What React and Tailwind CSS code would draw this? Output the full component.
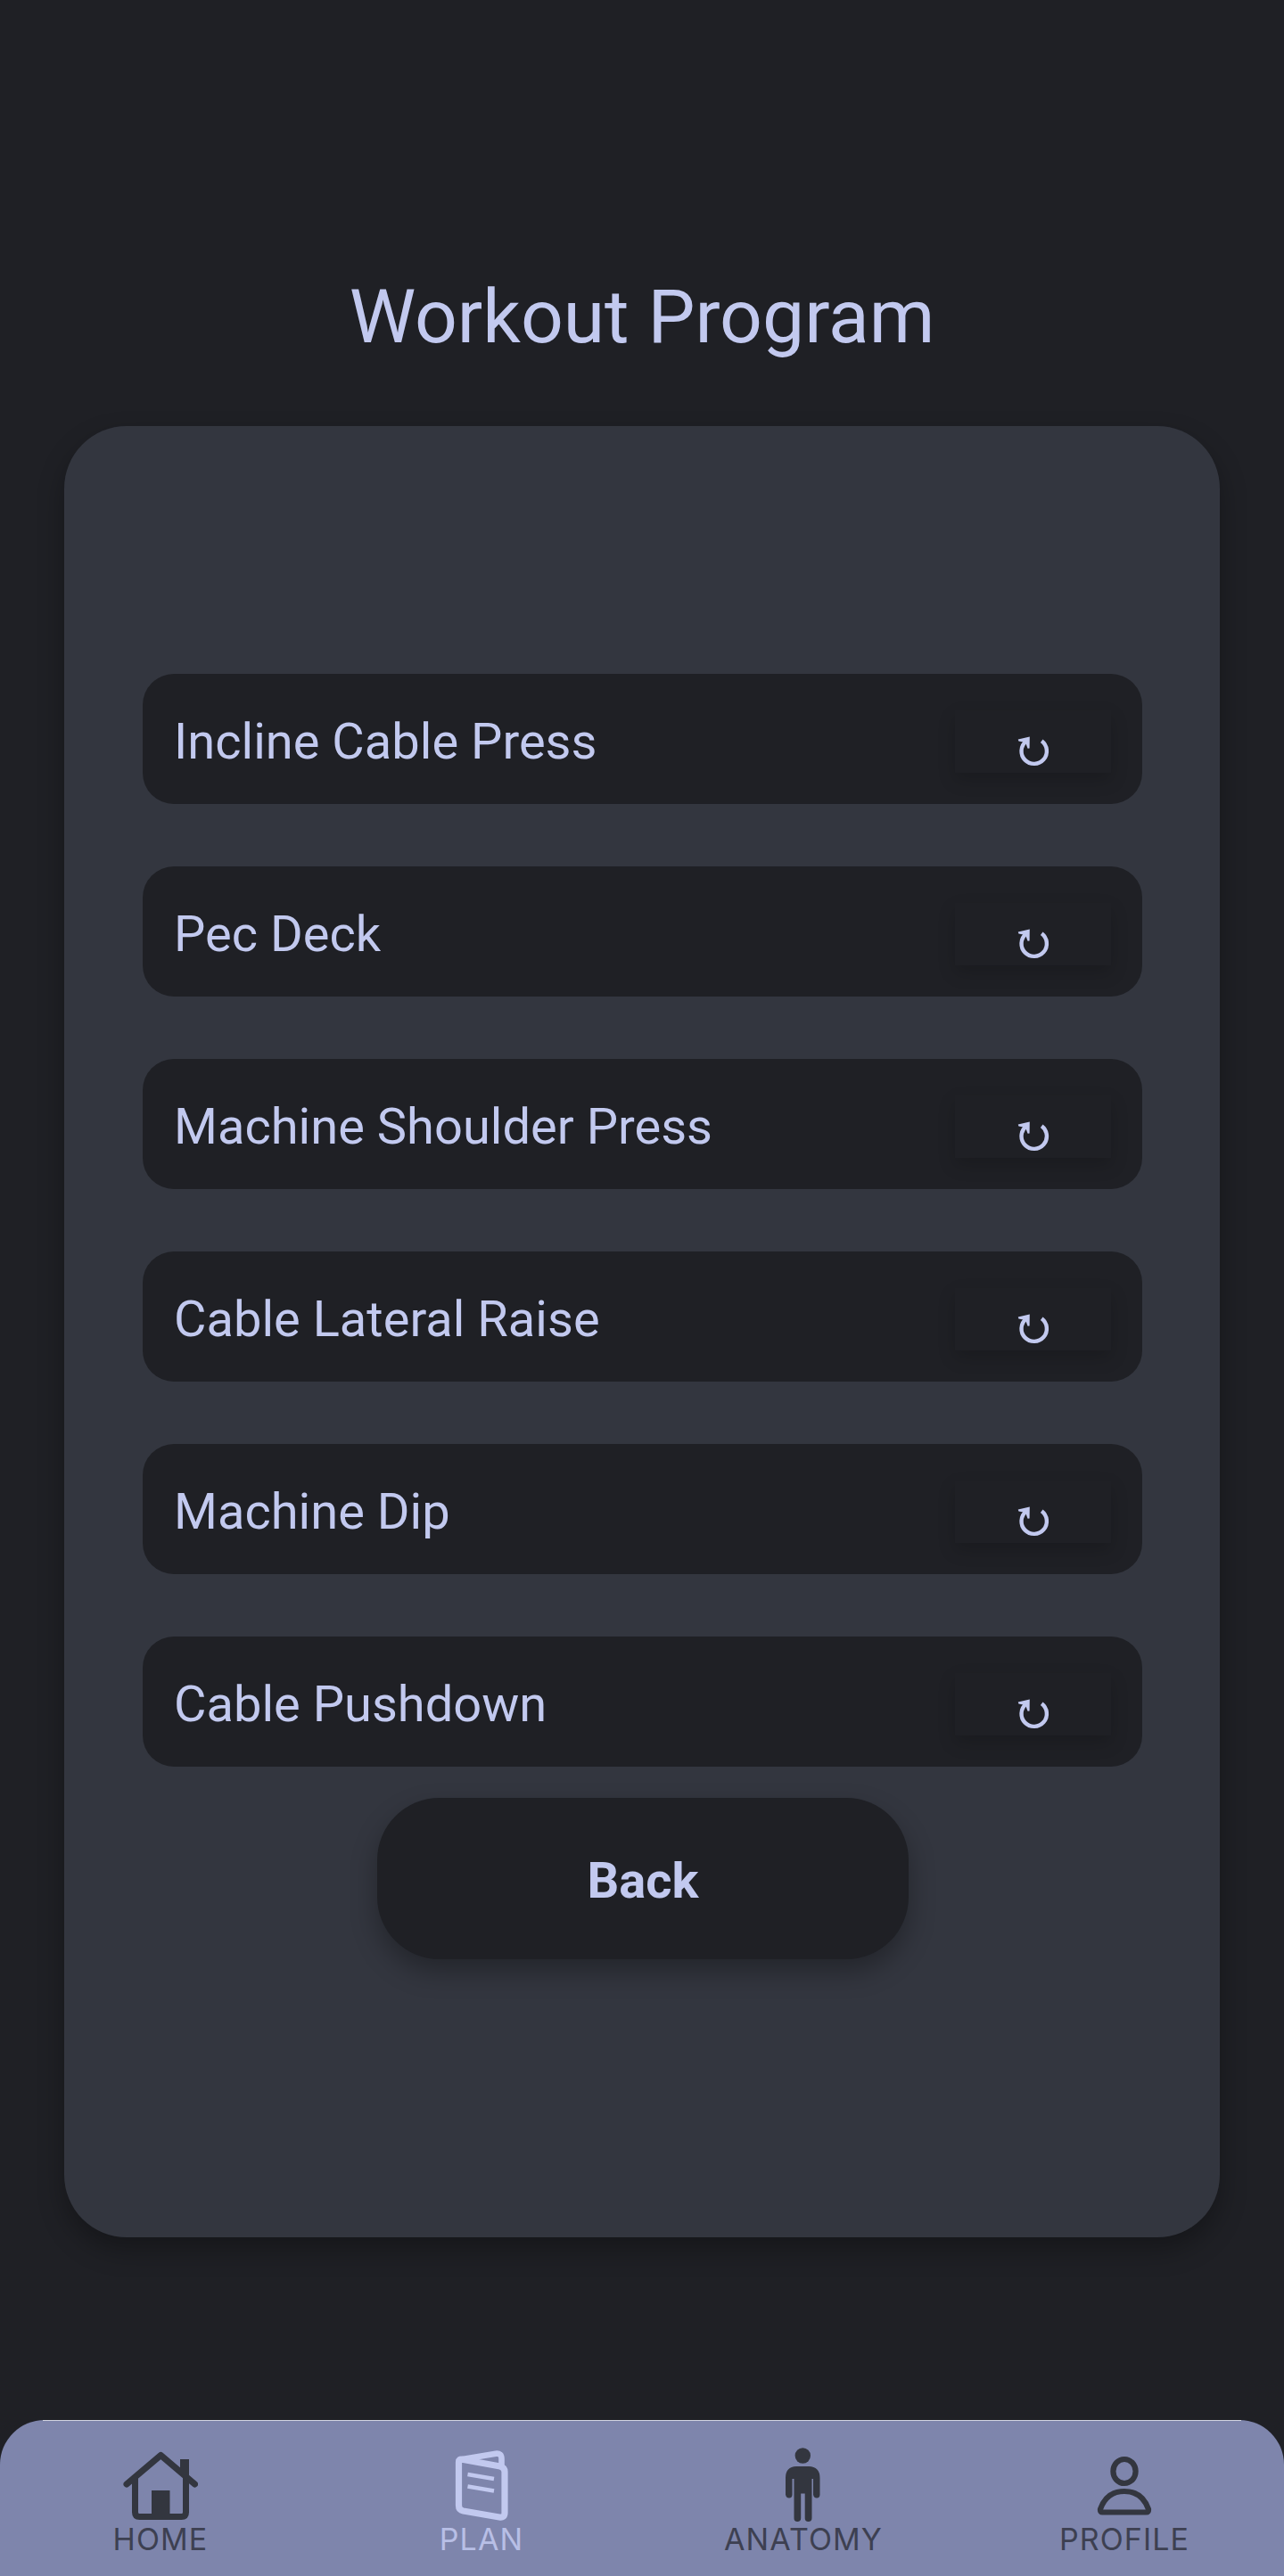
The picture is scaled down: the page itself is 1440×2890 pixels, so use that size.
const exercises = [
  "Incline Cable Press",
  "Pec Deck",
  "Machine Shoulder Press",
  "Cable Lateral Raise",
  "Machine Dip",
  "Cable Pushdown",
];

function RefreshIcon() {
  return (
    <svg width="36" height="34" viewBox="0 0 36 34" fill="none" className="mt-[29px] ml-px">
      <path d="M27.2 5.3A14.2 14.2 0 1 1 9.6 5.8" stroke="#c2c9ef" strokeWidth="4.4" />
      <path d="M0.8 3.4L13.8 0.6L13.6 13.4L11.6 13.8L9 7L1.4 5.4Z" fill="#c2c9ef" />
    </svg>
  );
}

function HomeIcon() {
  return (
    <svg width="84" height="78" viewBox="0 0 84 78" fill="none" stroke="#33363f" strokeLinecap="round" strokeLinejoin="round">
      <path d="M4 37L42.300 4.500L80.500 37" strokeWidth="7" />
      <path d="M13.500 30V68.500Q13.500 73.500 18.500 73.500H65.500Q70.500 73.500 70.500 68.500V30" strokeWidth="7" />
      <path d="M64 9H74V34L64 26Z" fill="#33363f" stroke="none" />
      <path d="M32 44H52.500V73H32Z" fill="#33363f" stroke="none" />
    </svg>
  );
}

function PlanIcon() {
  return (
    <svg width="60" height="80" viewBox="0 0 60 80" fill="none" stroke="#c2c9ef" strokeLinejoin="round">
      <path d="M4.500 13Q4.500 9.500 8.500 10.300L51 18Q56 19.500 56 24V70Q56 76 50 75L9.500 68Q4.500 67 4.500 62Z" strokeWidth="7.200" />
      <path d="M8.500 10L46 3.700Q52.500 3 52.500 9.500V19" strokeWidth="6.600" />
      <path d="M14.500 27L44 32M14.500 40.500L44 45.500" strokeWidth="4.500" />
    </svg>
  );
}

function AnatomyIcon() {
  return (
    <svg width="40" height="84" viewBox="0 0 40 84" fill="#33363f">
      <circle cx="20.300" cy="10" r="8.700" />
      <path d="M13 22H27Q39.500 22.500 39.500 35V53.500Q39.500 57.500 36 57.500T32 53.500V36H30.500V80Q30.500 84 26.500 84T22.700 80V52.500H18.200V80Q18.200 84 14.300 84T10.500 80V36H8.500V53.500Q8.500 57.500 5 57.500T1 53.500V35Q1 22.500 13 22Z" />
    </svg>
  );
}

function ProfileIcon() {
  return (
    <svg width="62" height="68" viewBox="0 0 62 68" fill="none" stroke="#33363f" strokeWidth="6.200" strokeLinejoin="round" className="ml-px">
      <ellipse cx="31" cy="17.500" rx="12.600" ry="13.500" />
      <path d="M6.500 63.500Q3.700 63.500 4 60Q11 40 31 40T58 60Q58.300 63.500 55.500 63.500Z" />
    </svg>
  );
}

const tabs = [
  { label: "HOME", Icon: HomeIcon, pad: "pb-[4px]", color: "text-[#3d4051]" },
  { label: "PLAN", Icon: PlanIcon, pad: "pb-[3px]", color: "text-[#b8bfe6]" },
  { label: "ANATOMY", Icon: AnatomyIcon, pad: "pb-[3px]", color: "text-[#3d4051] pl-[2px]" },
  { label: "PROFILE", Icon: ProfileIcon, pad: "pb-[9px]", color: "text-[#3d4051] pl-[2px]" },
];

export default function App() {
  return (
    <div className="flex h-[2890px] w-[1440px] flex-col overflow-hidden bg-[#1f2025] font-[Roboto,sans-serif] text-[#c2c9ef]">
      <h1 className="mt-[307px] text-center text-[84px] leading-[98px]">Workout Program</h1>
      <main className="mx-[72px] mt-[73px] flex h-[2032px] shrink-0 flex-col items-center rounded-[70px] bg-[#33363f] pt-[278px] pr-[87px] pl-[88px] shadow-[0_14px_30px_rgba(0,0,0,0.3)]">
        <ul className="flex w-full flex-col gap-[70px]">
          {exercises.map((name) => (
            <li key={name} className="flex h-[146px] items-center justify-between rounded-[35px] bg-[#1f2025] px-[35px]">
              <span className="pt-[6px] text-[56px] leading-[66px] tracking-[0.02px]">{name}</span>
              <button className="mt-[6px] flex h-[70px] w-[175px] items-start justify-center bg-[#1f2025] shadow-[0_8px_18px_rgba(0,0,0,0.17)]" aria-label={"Replace " + name}>
                <RefreshIcon />
              </button>
            </li>
          ))}
        </ul>
        <button className="mt-[35px] ml-px flex h-[181px] w-[596px] items-center justify-center rounded-[70px] bg-[#1f2025] pt-1 text-[56px] font-bold shadow-[0_14px_30px_rgba(0,0,0,0.3)]">
          Back
        </button>
      </main>
      <nav className="mt-auto h-[175px] shrink-0 rounded-t-[50px] bg-[#7e85ac]">
        <div className="mx-[48px] h-px bg-[#d3d5e2]" />
        <div className="grid grid-cols-4">
          {tabs.map(({ label, Icon, pad, color }) => (
            <div key={label} className="flex flex-col items-center">
              <div className={"flex h-[116px] items-end " + pad}><Icon /></div>
              <span className={"font-[Inter,sans-serif] text-[34px] leading-[34px] tracking-[1.1px] " + color}>{label}</span>
            </div>
          ))}
        </div>
      </nav>
    </div>
  );
}
